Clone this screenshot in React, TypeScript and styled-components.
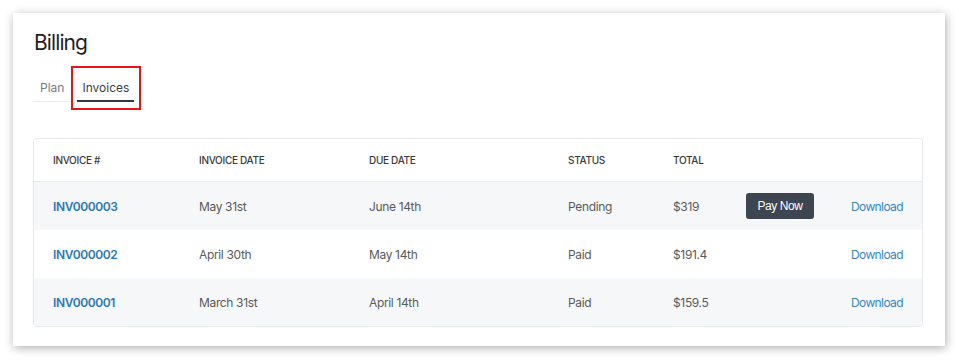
import React from 'react';
import styled, { createGlobalStyle, css } from 'styled-components';

const GlobalStyle = createGlobalStyle`
  html, body {
    margin: 0;
    padding: 0;
    background: #ffffff;
  }
  body {
    font-family: Inter, "Noto Sans", sans-serif;
    color: #333;
  }
`;

const Page = styled.div`
  padding: 13px;
`;

const Card = styled.div`
  width: 932px;
  box-sizing: border-box;
  background: #fff;
  padding: 16px 22px 19px 20px;
  box-shadow: 1px 2px 9px rgba(0, 0, 0, 0.32);
`;

const Title = styled.h1`
  margin: 0 0 0 1px;
  font-size: 21px;
  line-height: 28px;
  font-weight: 400;
  letter-spacing: -0.9px;
  color: #1f1f1f;
`;

const TabList = styled.div`
  display: flex;
  align-items: flex-end;
  gap: 7px;
  margin: 23px 0 0 1px;
`;

const Tab = styled.div<{ $active?: boolean }>`
  position: relative;
  font-size: 12px;
  line-height: 16px;
  padding: 0 5px 5px;
  color: #7a7a7a;
  border-bottom: 1px solid #ececec;
  cursor: pointer;
  ${(p) =>
    p.$active &&
    css`
      color: #3a3f47;
      padding-bottom: 4px;
      border-bottom: 2px solid #2f3540;
    `}
`;

const FirstTab = styled(Tab)`
  padding-left: 6px;
  padding-right: 6px;
`;

const Highlight = styled.span`
  position: absolute;
  top: -14px;
  left: -6px;
  right: -7px;
  bottom: -10px;
  border: 2px solid #e8141a;
  pointer-events: none;
`;

const Table = styled.div`
  margin-top: 36px;
  border: 1px solid #e6e8ec;
  border-radius: 4px;
  overflow: hidden;
`;

const Row = styled.div<{ $head?: boolean; $striped?: boolean }>`
  display: grid;
  grid-template-columns: 146px 170px 199px 105px 73px 1fr auto;
  align-items: center;
  padding: 0 19px 0 19px;
  height: 48px;
  background: ${(p) => (p.$striped ? '#f6f7f9' : '#fff')};
  ${(p) =>
    p.$head &&
    css`
      height: 42px;
      border-bottom: 1px solid #e6e8ec;
    `}
`;

const HeadCell = styled.div`
  font-size: 10px;
  font-weight: 500;
  letter-spacing: -0.3px;
  text-transform: uppercase;
  color: #3a3a3a;
`;

const Cell = styled.div`
  font-size: 12px;
  letter-spacing: -0.35px;
  color: #5a5a5a;
`;

const InvoiceLink = styled.a`
  font-size: 12px;
  font-weight: 600;
  letter-spacing: -0.4px;
  color: #2b79b6;
  text-decoration: none;
  cursor: pointer;
`;

const DownloadLink = styled.a`
  font-size: 12px;
  letter-spacing: -0.6px;
  color: #3a86c0;
  text-decoration: none;
  cursor: pointer;
  justify-self: end;
`;

const PayButton = styled.button`
  width: 68px;
  height: 26px;
  margin-top: -2px;
  border: none;
  border-radius: 3px;
  background: #3d4550;
  color: #fff;
  font-family: "Liberation Sans", Arial, sans-serif;
  font-size: 12px;
  letter-spacing: -0.4px;
  cursor: pointer;
`;

type Invoice = {
  id: string;
  date: string;
  due: string;
  status: string;
  total: string;
  payable?: boolean;
};

const INVOICES: Invoice[] = [
  { id: 'INV000003', date: 'May 31st', due: 'June 14th', status: 'Pending', total: '$319', payable: true },
  { id: 'INV000002', date: 'April 30th', due: 'May 14th', status: 'Paid', total: '$191.4' },
  { id: 'INV000001', date: 'March 31st', due: 'April 14th', status: 'Paid', total: '$159.5' },
];

export default function App() {
  return (
    <>
      <GlobalStyle />
      <Page>
        <Card>
          <Title>Billing</Title>
          <TabList>
            <FirstTab>Plan</FirstTab>
            <Tab $active>
              Invoices
              <Highlight />
            </Tab>
          </TabList>
          <Table>
            <Row $head>
              <HeadCell>Invoice #</HeadCell>
              <HeadCell>Invoice Date</HeadCell>
              <HeadCell>Due Date</HeadCell>
              <HeadCell>Status</HeadCell>
              <HeadCell>Total</HeadCell>
              <span />
              <span />
            </Row>
            {INVOICES.map((inv, i) => (
              <Row key={inv.id} $striped={i % 2 === 0}>
                <InvoiceLink>{inv.id}</InvoiceLink>
                <Cell>{inv.date}</Cell>
                <Cell>{inv.due}</Cell>
                <Cell>{inv.status}</Cell>
                <Cell>{inv.total}</Cell>
                <div>{inv.payable && <PayButton>Pay Now</PayButton>}</div>
                <DownloadLink>Download</DownloadLink>
              </Row>
            ))}
          </Table>
        </Card>
      </Page>
    </>
  );
}
